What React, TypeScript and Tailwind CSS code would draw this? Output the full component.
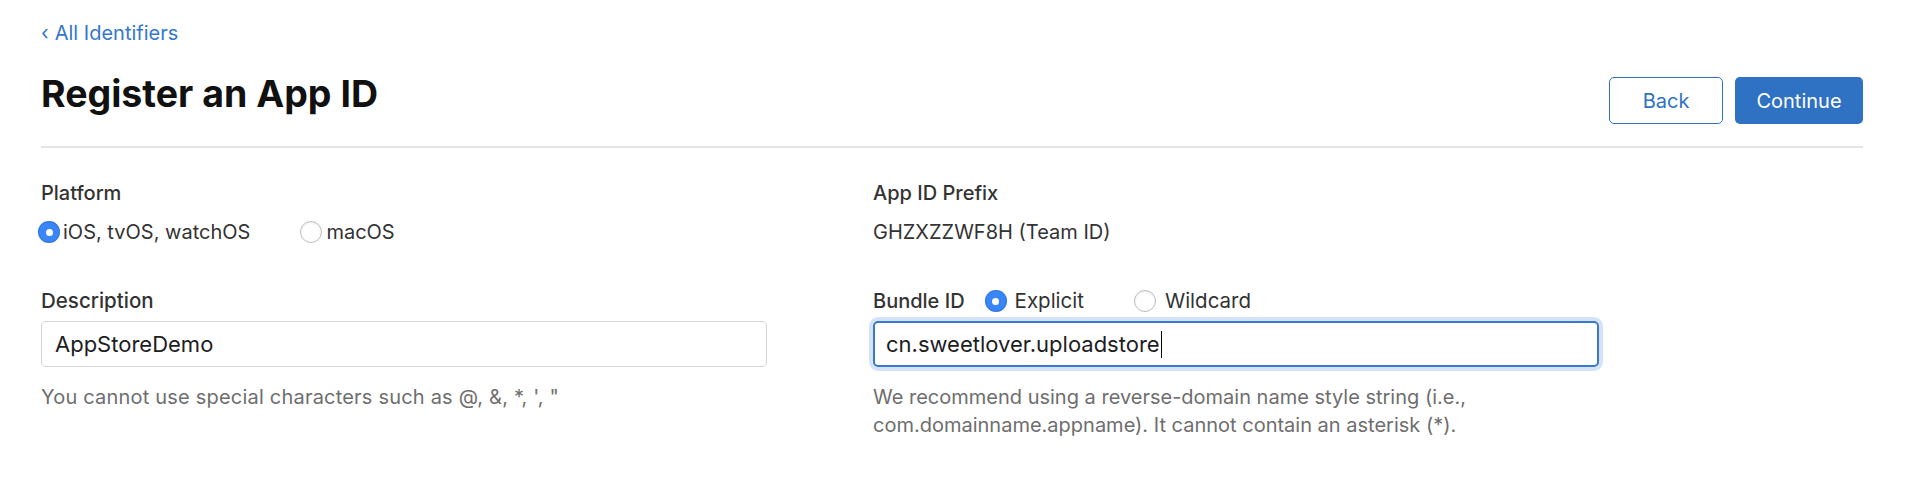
import React from 'react'

function Radio({ checked }: { checked: boolean }) {
  if (checked) {
    return (
      <span className="w-[22px] h-[22px] rounded-full bg-[#3b86f6] flex items-center justify-center shrink-0 shadow-[inset_0_0_0_1px_rgba(30,90,200,0.35)]">
        <span className="w-[7px] h-[7px] rounded-full bg-white" />
      </span>
    )
  }
  return (
    <span className="w-[22px] h-[22px] rounded-full bg-white border border-[#bdbdbd] shrink-0 shadow-[inset_0_1px_2px_rgba(0,0,0,0.08)]" />
  )
}

export default function App() {
  return (
    <div className="min-h-screen bg-white font-['Inter','Liberation_Sans',sans-serif] text-[#1d1d1f]">
      <div className="ml-[41px] w-[1822px] pt-[20px]">
        {/* back link */}
        <div className="h-[26px] leading-[26px] text-[20px] text-[#3477cc]">
          <span className="mr-[6px]">‹</span>All Identifiers
        </div>

        {/* header */}
        <div className="mt-[26px] flex items-start justify-between">
          <h1 className="text-[37.5px] leading-[44px] font-bold text-[#111]">Register an App ID</h1>
          <div className="mt-[5px] flex gap-[12px]">
            <button className="w-[114px] h-[47px] rounded-[5px] border border-[#2f72c4] text-[#2f72c4] text-[20px] bg-white">
              Back
            </button>
            <button className="w-[128px] h-[47px] rounded-[5px] bg-[#2f72c4] text-white text-[20px]">
              Continue
            </button>
          </div>
        </div>

        <div className="mt-[22px] h-[2px] bg-[#e4e4e4]" />

        {/* form */}
        <div className="grid grid-cols-[832px_1fr]">
          {/* left column */}
          <div>
            <div className="mt-[33px] text-[20px] leading-[24px] font-medium text-[#333]">Platform</div>
            <div className="mt-[15px] h-[24px] flex items-center text-[20px] text-[#333]">
              <span className="-ml-[3px] flex items-center gap-[3px]">
                <Radio checked />
                iOS, tvOS, watchOS
              </span>
              <span className="ml-[50px] flex items-center gap-[4px]">
                <Radio checked={false} />
                macOS
              </span>
            </div>

            <div className="mt-[45px] text-[20.5px] leading-[24px] font-medium text-[#333]">Description</div>
            <div className="mt-[8px] w-[726px] h-[46px] rounded-[5px] border-[1.5px] border-[#d4d4d4] flex items-center px-[13px] text-[22px] text-[#1d1d1f]">
              AppStoreDemo
            </div>
            <p className="mt-[16px] text-[20px] leading-[28px] tracking-[0.2px] text-[#6e6e6e]">
              You cannot use special characters such as @, &amp;, *, ', "
            </p>
          </div>

          {/* right column */}
          <div>
            <div className="mt-[33px] text-[20px] leading-[24px] font-medium text-[#333]">App ID Prefix</div>
            <div className="mt-[15px] h-[24px] flex items-center text-[20px] text-[#333]">
              GHZXZZWF8H (Team ID)
            </div>

            <div className="mt-[45px] h-[24px] flex items-center text-[20px]">
              <span className="font-medium text-[#333]">Bundle ID</span>
              <span className="ml-[20px] flex items-center gap-[8px] text-[20.5px] text-[#333]">
                <Radio checked />
                Explicit
              </span>
              <span className="ml-[50px] flex items-center gap-[9px] text-[20.5px] text-[#333]">
                <Radio checked={false} />
                Wildcard
              </span>
            </div>
            <div className="mt-[8px] w-[726px] h-[46px] rounded-[5px] border-2 border-[#3a78d0] shadow-[0_0_0_4px_#d5e3f6] flex items-center px-[11px] text-[22px] text-[#1d1d1f]">
              cn.sweetlover.uploadstore
              <span className="ml-[1px] w-[1.5px] h-[27px] bg-black" />
            </div>
            <p className="mt-[16px] text-[20px] leading-[28px] text-[#6e6e6e] w-[615px]">
              We recommend using a reverse-domain name style string (i.e., com.domainname.appname). It cannot contain an asterisk (*).
            </p>
          </div>
        </div>
      </div>
    </div>
  )
}
